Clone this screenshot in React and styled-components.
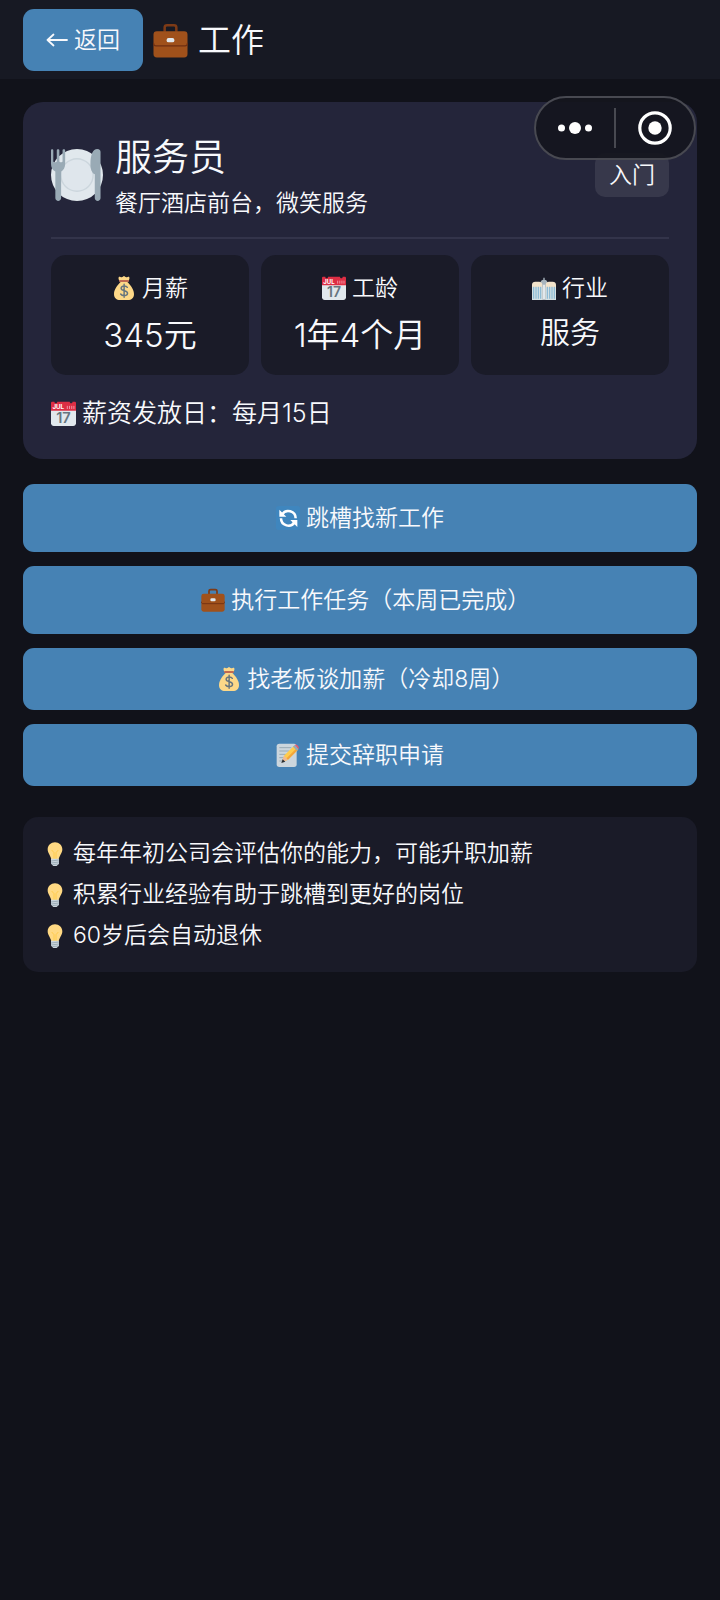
import React from "react";
import styled, { createGlobalStyle } from "styled-components";

const GlobalStyle = createGlobalStyle`
  * {
    box-sizing: border-box;
  }

  body {
    margin: 0;
    background: #11121a;
    color: #f8f9fc;
    font-family: Inter, "Noto Sans CJK SC", sans-serif;
    font-size: 23px;
    font-weight: 350;
  }

  h1, h2, p, ul, dl, dt, dd {
    margin: 0;
    padding: 0;
    font-weight: inherit;
  }

  button {
    border: 0;
    color: inherit;
    font: inherit;
    line-height: 34px;
    cursor: pointer;
  }
`;

const Header = styled.header`
  display: flex;
  align-items: center;
  gap: 10px;
  padding: 9px 23px 8px;
  background: #171923;
`;

const BackButton = styled.button`
  display: flex;
  align-items: center;
  gap: 6px;
  height: 62px;
  padding: 0 23px;
  border-radius: 11px;
  background: #4682b4;
`;

const Title = styled.h1`
  display: flex;
  align-items: center;
  gap: 10px;
  font-size: 33px;
  line-height: 48px;
`;

const Main = styled.main`
  padding: 23px;
`;

const Card = styled.section`
  padding: 28px;
  border-radius: 20px;
  background: #24253a;
`;

const CardHead = styled.div`
  display: flex;
  align-items: center;
  gap: 12px;
  padding: 1px 0 18px;
  border-bottom: 2px solid #33344a;
`;

const JobInfo = styled.div`
  display: flex;
  flex: 1;
  flex-direction: column;
  gap: 2px;
`;

const JobName = styled.h2`
  font-size: 37px;
  line-height: 54px;
`;

const JobDesc = styled.p`
  line-height: 32px;
`;

const Badge = styled.span`
  padding: 5px 14px;
  border-radius: 10px;
  background: #37384b;
  line-height: 34px;
`;

const Stats = styled.dl`
  display: grid;
  grid-template-columns: repeat(3, 1fr);
  gap: 12px;
  margin-top: 16px;
`;

const Stat = styled.div`
  display: flex;
  flex-direction: column;
  align-items: center;
  gap: 6px;
  padding: 16px 8px;
  border-radius: 15px;
  background: #1a1b28;
`;

const StatLabel = styled.dt`
  display: flex;
  align-items: center;
  gap: 6px;
  line-height: 34px;
`;

const StatValue = styled.dd`
  font-size: ${({ $small }) => ($small ? "30px" : "33px")};
  line-height: ${({ $small }) => ($small ? "42px" : "48px")};
`;

const Payday = styled.p`
  display: flex;
  align-items: center;
  gap: 6px;
  margin-top: 21px;
  font-size: 25px;
  line-height: 35px;
`;

const Actions = styled.div`
  display: flex;
  flex-direction: column;
  gap: 14px;
  margin-top: 25px;
`;

const ActionButton = styled.button`
  display: flex;
  align-items: center;
  justify-content: center;
  gap: 6px;
  height: ${({ $tall }) => ($tall ? "68px" : "62px")};
  border-radius: 11px;
  background: #4682b4;
`;

// half-width closing bracket, so a label stays optically centred
const HalfWidth = styled.span`
  font-feature-settings: "halt";
`;

const Tips = styled.ul`
  margin-top: 31px;
  padding: 16px 20px;
  border-radius: 15px;
  background: #1a1b28;
  list-style: none;
`;

const Tip = styled.li`
  display: flex;
  align-items: center;
  gap: 6px;
  line-height: 41px;
`;

// floats over the page in the top right corner
const Capsule = styled.div`
  position: absolute;
  top: 96px;
  right: 24px;
  display: flex;
  align-items: center;
  width: 162px;
  height: 64px;
  border: 2px solid #484951;
  border-radius: 32px;
  background: rgba(20, 21, 30, 0.93);
`;

const CapsuleButton = styled.button`
  display: flex;
  flex: 1;
  align-items: center;
  justify-content: center;
  height: 100%;
  padding: 0;
  background: none;
`;

const CapsuleDivider = styled.span`
  width: 2px;
  height: 40px;
  background: #484951;
`;

const Icon = styled.svg.attrs({ viewBox: "0 0 36 36", "aria-hidden": true })`
  flex: none;
  width: ${({ $size }) => $size || 24}px;
  height: ${({ $size }) => $size || 24}px;
`;

const Arrow = styled.svg`
  flex: none;
  width: 22px;
  height: 16px;
`;

const Briefcase = ({ size }) => (
  <Icon $size={size}>
    <path
      d="M12 9V4.500C12 3 13 2.300 14.500 2.300h7C23 2.300 24 3 24 4.500V9"
      fill="none"
      stroke="#7d3a16"
      strokeWidth="2.600"
    />
    <rect x="0.500" y="8.500" width="35" height="27" rx="3.500" fill="#a0511b" />
    <path d="M.5 20.500c0 2 1 3 2.500 3h30c1.500 0 2.500-1 2.500-3" fill="none" stroke="#6f2f12" strokeWidth="1.300" />
    <rect x="14" y="15.500" width="8" height="4.400" rx="2" fill="#e1e8ed" />
  </Icon>
);

const Plate = ({ size }) => (
  <Icon $size={size}>
    <circle cx="18" cy="18" r="18" fill="#e1e8ed" />
    <circle cx="18" cy="18" r="11.700" fill="#ccd6dd" />
    <circle cx="18" cy="18" r="10.700" fill="#dfe6ec" />
    <path
      d="M0 1C0 0 1.600 0 1.600 1v7.500c0 1 2.400 1 2.400 0V1C4 0 5.800 0 5.800 1v7.500c0 1 2.200 1 2.200 0V1c0-1 1.800-1 1.800 0v9c0 3-1 4.500-2.800 5.500V34c0 2.600-4 2.600-4 0V15.500C1 14.500 0 13 0 10z"
      fill="#99aab5"
    />
    <path
      d="M34.300 34c0 2.600-4 2.600-4 0V17.500c-2-1-3-3.500-3-7C27.300 4 29 0 32 0c1.700 0 2.300 1 2.300 2z"
      fill="#99aab5"
    />
  </Icon>
);

const MoneyBag = ({ size }) => (
  <Icon $size={size}>
    <path
      d="M13 9c-3 3-10 10-10 18 0 6 4 9 9 9h12c5 0 9-3 9-9 0-8-7-15-10-18z"
      fill="#fdd888"
    />
    <path d="M12 8C9 5 9.500 1 11 1c1.500 0 2 1 3.500 1S17 0 18 0s2 2 3.500 2S24 1 25 1c1.500 0 2 4-1 7z" fill="#fdd888" />
    <rect x="10.500" y="6" width="15" height="3" rx="1.500" fill="#bf6952" />
    <path
      d="M23 17c-1-1.500-2.600-2-4.700-2-2.700 0-4.600 1.200-4.600 3.400 0 2.400 2 3 4.600 3.600 2.800.7 5 1.400 5 4 0 2.200-2 3.500-4.900 3.500-2.300 0-4.300-.8-5.400-2.500M18.200 12.500v19.500"
      fill="none"
      stroke="#67757f"
      strokeWidth="2.200"
      strokeLinecap="round"
    />
  </Icon>
);

const Calendar = ({ size }) => (
  <Icon $size={size}>
    <path d="M36 32c0 2.200-1.800 4-4 4H4c-2.200 0-4-1.800-4-4V9h36z" fill="#e1e8ed" />
    <path d="M0 3c0-1.500 1-2 2-2h3c0 3 4 3 4 0h18c0 3 4 3 4 0h3c1 0 2 .5 2 2v11H0z" fill="#dd2e44" />
    <path d="M23.500 7v4.500M26.700 7v4.500M29.900 7v4.500M33 7v4.500" stroke="#f4abba" strokeWidth="1.200" />
    <text x="2" y="11.500" fill="#fff" fontSize="9" fontWeight="700">
      JUL
    </text>
    <text x="18" y="32" fill="#66757f" fontSize="21" fontWeight="600" textAnchor="middle">
      17
    </text>
  </Icon>
);

const Offices = ({ size }) => (
  <Icon $size={size}>
    <path d="M13 36V9c0-2 2-3 4-3.500V2.500h2v3c2 .5 4 1.500 4 3.500v27z" fill="#a7b4bd" />
    <path d="M0 36V13c0-3 2-4.500 5-4.500h5.500c3 0 5 1.500 5 4.500v23zM20.500 36V13c0-3 2-4.500 5-4.500H31c3 0 5 1.500 5 4.500v23z" fill="#f2e3cb" />
    <path d="M0 17h15.500v19H0zM20.500 17H36v19H20.500z" fill="#d5e0e3" />
    <path d="M2.500 16v18M6 16v18M9.500 16v18M13 16v18M23 16v18M26.500 16v18M30 16v18M33.500 16v18" stroke="#84b6d2" strokeWidth="1.600" />
    <path d="M18 13v22" stroke="#e1e8ed" strokeWidth="3" />
  </Icon>
);

const Refresh = ({ size }) => (
  <Icon $size={size}>
    <rect width="36" height="36" rx="4" fill="#3f86be" />
    <g fill="none" stroke="#fff" strokeWidth="3.800">
      <path d="M9 13A11 11 0 0 1 29.500 18.500" />
      <path d="M28 24A11 11 0 0 1 7.500 18.500" />
    </g>
    <path d="M5 5.500V16h10.500zM32 31.500V21H21.500z" fill="#fff" />
  </Icon>
);

const Memo = ({ size }) => (
  <Icon $size={size}>
    <rect x="1" y="1" width="30" height="35" rx="4" fill="#ccd6dd" />
    <path d="M5 7h18M5 12h15M5 17h11M5 22h8M5 27h6" stroke="#99aab5" strokeWidth="1.500" />
    <path d="M9 29l3-10L27 4l6 6-15 15z" fill="#ffcc4d" />
    <path d="M12 19l6 6-9.500 4z" fill="#f0b995" />
    <path d="M8 30l2-5.500 4 3.500z" fill="#292f33" />
    <path d="M18 25l15-15-2.200-2.200L15.800 22.800z" fill="#f4a53a" />
    <path d="M25.500 5.500l6 6 2.500-2.500-6-6z" fill="#99aab5" />
    <path d="M28 3c2-3 8 3 6 6z" fill="#ea596e" />
  </Icon>
);

const Bulb = ({ size }) => (
  <Icon $size={size}>
    <path
      d="M29 11.060C29 17 25 19.500 23.500 26h-11C11 19.500 7 17 7 11.060 7 5 12 .5 18 .5s11 4.500 11 10.560z"
      fill="#ffd983"
    />
    <path d="M13 12l3.500 4v10M23 12l-3.500 4v10" fill="none" stroke="#ffcc4d" strokeWidth="1.500" />
    <path d="M12 25h12v7.500L20.500 36h-5L12 32.500z" fill="#ccd6dd" />
    <path d="M12 28.500l12-1.500M12 31.500l12-1.500M14 34l9-1" stroke="#99aab5" strokeWidth="1.400" />
  </Icon>
);

const stats = [
  { label: "月薪", value: "345元", icon: MoneyBag },
  { label: "工龄", value: "1年4个月", icon: Calendar },
  { label: "行业", value: "服务", icon: Offices, small: true },
];

const actions = [
  { label: "跳槽找新工作", icon: Refresh, tall: true },
  { label: "执行工作任务", note: "（本周已完成", icon: Briefcase, tall: true },
  { label: "找老板谈加薪", note: "（冷却8周", icon: MoneyBag },
  { label: "提交辞职申请", icon: Memo },
];

const tips = [
  "每年年初公司会评估你的能力，可能升职加薪",
  "积累行业经验有助于跳槽到更好的岗位",
  "60岁后会自动退休",
];

const App = () => {
  return (
    <>
      <GlobalStyle />
      <Header>
        <BackButton type="button">
          <Arrow viewBox="0 0 22 16" aria-hidden="true">
            <path
              d="M7.500 2.500L1.500 8l6 5.500M1.500 8H21"
              fill="none"
              stroke="currentColor"
              strokeWidth="1.800"
              strokeLinecap="round"
              strokeLinejoin="round"
            />
          </Arrow>
          返回
        </BackButton>
        <Title>
          <Briefcase size={35} />
          工作
        </Title>
      </Header>

      <Main>
        <Card>
          <CardHead>
            <Plate size={52} />
            <JobInfo>
              <JobName>服务员</JobName>
              <JobDesc>餐厅酒店前台，微笑服务</JobDesc>
            </JobInfo>
            <Badge>入门</Badge>
          </CardHead>

          <Stats>
            {stats.map(({ label, value, icon: StatIcon, small }) => (
              <Stat key={label}>
                <StatLabel>
                  <StatIcon />
                  {label}
                </StatLabel>
                <StatValue $small={small}>{value}</StatValue>
              </Stat>
            ))}
          </Stats>

          <Payday>
            <Calendar size={25} />
            薪资发放日：每月15日
          </Payday>
        </Card>

        <Actions>
          {actions.map(({ label, note, icon: ActionIcon, tall }) => (
            <ActionButton key={label} type="button" $tall={tall}>
              <ActionIcon />
              <span>
                {label}
                {note}
                {note && <HalfWidth>）</HalfWidth>}
              </span>
            </ActionButton>
          ))}
        </Actions>

        <Tips>
          {tips.map((tip) => (
            <Tip key={tip}>
              <Bulb />
              {tip}
            </Tip>
          ))}
        </Tips>
      </Main>

      <Capsule>
        <CapsuleButton type="button" aria-label="更多">
          <svg width="36" height="14" viewBox="0 0 36 14" fill="#fff">
            <circle cx="4.500" cy="7" r="3.500" />
            <circle cx="18" cy="7" r="6" />
            <circle cx="31.500" cy="7" r="3.500" />
          </svg>
        </CapsuleButton>
        <CapsuleDivider />
        <CapsuleButton type="button" aria-label="关闭">
          <svg width="34" height="34" viewBox="0 0 34 34">
            <circle cx="17" cy="17" r="15.200" fill="none" stroke="#fff" strokeWidth="3.200" />
            <circle cx="17" cy="17" r="6.700" fill="#fff" />
          </svg>
        </CapsuleButton>
      </Capsule>
    </>
  );
};

export default App;
